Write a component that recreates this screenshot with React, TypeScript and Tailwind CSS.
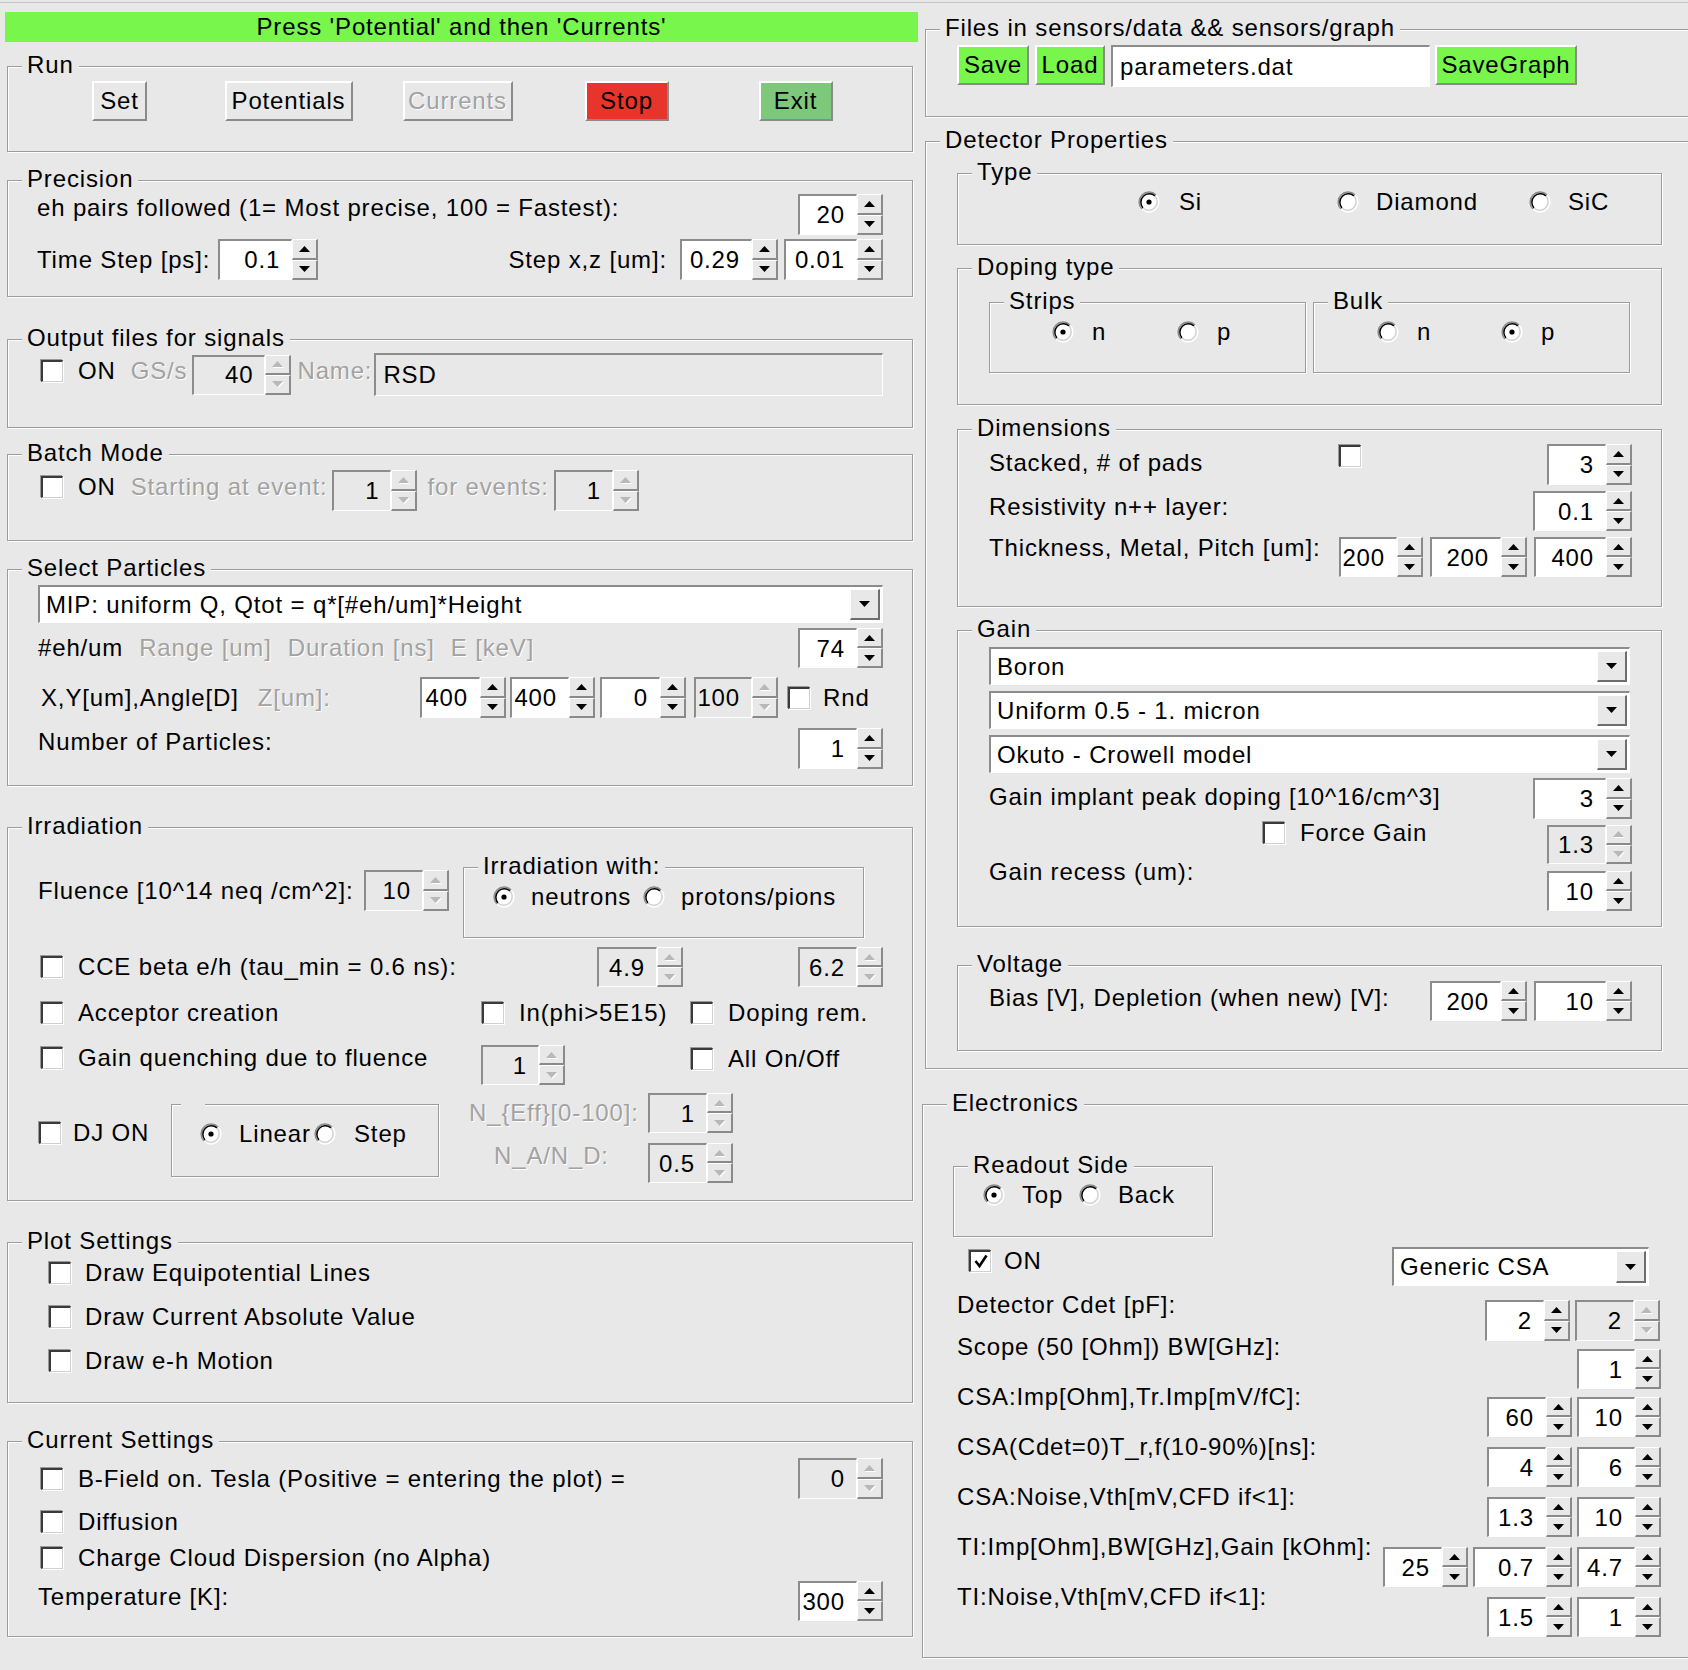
import React from "react";

type P = { className?: string; children?: React.ReactNode };

// etched group frame with its title sitting on the top line
const Box = ({
  label,
  lx = "left-[14px] px-[5px]",
  className = "",
  children,
}: P & { label?: string; lx?: string }) => (
  <div
    className={`relative shrink-0 border border-[#9c9c9c] shadow-[inset_1px_1px_0_#fff,1px_1px_0_#fff] ${className}`}
  >
    {label !== undefined && (
      <span className={`absolute top-[-16px] bg-[#e8e8e8] whitespace-nowrap ${lx}`}>{label}</span>
    )}
    {children}
  </div>
);

const G = ({ className = "", children }: P) => (
  <span className={`text-[#a2a2a2] [text-shadow:1px_1px_0_#fff] ${className}`}>{children}</span>
);

const Btn = ({ className = "", children }: P) => (
  <div
    className={`flex items-center justify-center h-[40px] shrink-0 border-t-2 border-l-2 border-t-white border-l-white border-b-2 border-r-2 border-b-[#8a8a8a] border-r-[#8a8a8a] ${className}`}
  >
    {children}
  </div>
);

const Tri = ({ up, dis }: { up?: boolean; dis?: boolean }) => (
  <svg width="11" height="6" viewBox="0 0 11 6" className={dis ? "drop-shadow-[1px_1px_0_#fff]" : ""}>
    <path d={up ? "M0 6 L5.5 0 L11 6 Z" : "M0 0 L11 0 L5.5 6 Z"} fill={dis ? "#b8b8b8" : "#000"} />
  </svg>
);

const Arr = ({ up, dis }: { up?: boolean; dis?: boolean }) => (
  <div className="flex-1 flex items-center justify-center bg-[#e8e8e8] border-t border-l border-t-white border-l-white border-b-2 border-r-2 border-b-[#8a8a8a] border-r-[#8a8a8a]">
    <Tri up={up} dis={dis} />
  </div>
);

const Spin = ({ v, dis, className = "w-[85px] h-[41px]" }: { v: string; dis?: boolean; className?: string }) => (
  <div className={`flex shrink-0 ${className}`}>
    <div
      className={`flex-1 flex items-center justify-end pr-[11px] border-t-2 border-l-2 border-t-[#8c8c8c] border-l-[#8c8c8c] border-b border-r border-b-white border-r-white ${
        dis ? "bg-[#e8e8e8]" : "bg-white"
      }`}
    >
      {v}
    </div>
    <div className="w-[26px] flex flex-col">
      <Arr up dis={dis} />
      <Arr dis={dis} />
    </div>
  </div>
);

const Entry = ({ v, dis, className = "" }: { v: string; dis?: boolean; className?: string }) => (
  <div
    className={`flex items-center pl-[7px] shrink-0 border-t-2 border-l-2 border-t-[#8c8c8c] border-l-[#8c8c8c] border-b border-r border-b-white border-r-white ${
      dis ? "bg-[#e8e8e8]" : "bg-white"
    } ${className}`}
  >
    {v}
  </div>
);

const Combo = ({ v, className = "" }: { v: string; className?: string }) => (
  <div
    className={`flex items-stretch shrink-0 bg-white border-t-2 border-l-2 border-t-[#8c8c8c] border-l-[#8c8c8c] border-b border-r border-b-white border-r-white ${className}`}
  >
    <span className="flex-1 flex items-center pl-[6px]">{v}</span>
    <div className="w-[30px] my-[2px] mr-[2px] flex items-center justify-center bg-[#e8e8e8] border-t border-l border-t-white border-l-white border-b-2 border-r-2 border-b-[#6e6e6e] border-r-[#6e6e6e]">
      <Tri />
    </div>
  </div>
);

const Chk = ({ on, className = "" }: { on?: boolean; className?: string }) => (
  <div
    className={`shrink-0 w-[22px] h-[22px] flex items-center justify-center bg-white border-t-2 border-l-2 border-t-[#3a3a3a] border-l-[#3a3a3a] border-b border-r border-b-[#d0d0d0] border-r-[#d0d0d0] shadow-[-1px_-1px_0_#9a9a9a,1px_1px_0_#fff] ${className}`}
  >
    {on && (
      <svg width="16" height="16" viewBox="0 0 16 16">
        <path d="M2.5 8 L6.5 13 L13.5 2.5" stroke="#000" strokeWidth="2.6" fill="none" />
      </svg>
    )}
  </div>
);

const Radio = ({ on }: { on?: boolean }) => (
  <svg width="22" height="22" viewBox="0 0 22 22" className="shrink-0">
    <circle cx="11" cy="11" r="8.5" fill="#fff" />
    <path d="M3.93 18.07 A10 10 0 0 1 18.07 3.93" stroke="#8a8a8a" strokeWidth="1.5" fill="none" />
    <path d="M3.93 18.07 A10 10 0 0 0 18.07 3.93" stroke="#fff" strokeWidth="1.5" fill="none" />
    <path d="M5 17 A8.5 8.5 0 0 1 17 5" stroke="#000" strokeWidth="1.5" fill="none" />
    <path d="M5 17 A8.5 8.5 0 0 0 17 5" stroke="#d4d4d4" strokeWidth="1.5" fill="none" />
    {on && <circle cx="11" cy="11" r="2.6" fill="#000" />}
  </svg>
);

const Left = () => (
  <div className="w-[920px] shrink-0 flex flex-col">
    <div className="mt-[9px] ml-[5px] w-[913px] h-[30px] bg-[#78f64c] flex items-center justify-center">
      Press 'Potential' and then 'Currents'
    </div>

    <Box label="Run" className="mt-[24px] ml-[7px] w-[906px] h-[86px]">
      <div className="grid grid-cols-5 ml-[27px] w-[845px] mt-[14px]">
        <div className="flex justify-center">
          <Btn className="w-[55px]">Set</Btn>
        </div>
        <div className="flex justify-center">
          <Btn className="w-[128px]">Potentials</Btn>
        </div>
        <div className="flex justify-center">
          <Btn className="w-[110px]">
            <G>Currents</G>
          </Btn>
        </div>
        <div className="flex justify-center">
          <Btn className="w-[84px] bg-[#e8352b]">Stop</Btn>
        </div>
        <div className="flex justify-center">
          <Btn className="w-[74px] bg-[#7dc87a]">Exit</Btn>
        </div>
      </div>
    </Box>

    <Box label="Precision" className="mt-[28px] ml-[7px] w-[906px] h-[117px]">
      <div className="flex items-center justify-between h-[41px] mt-[13px] pl-[29px] pr-[29px]">
        <span className="mb-[13px]">eh pairs followed (1= Most precise, 100 = Fastest):</span>
        <Spin v="20" />
      </div>
      <div className="flex items-center h-[41px] mt-[4px] pl-[29px] pr-[29px]">
        <span>Time Step [ps]:</span>
        <Spin v="0.1" className="ml-[8px] w-[100px] h-[41px]" />
        <span className="ml-auto">Step x,z [um]:</span>
        <Spin v="0.29" className="ml-[13px] w-[98px] h-[41px]" />
        <Spin v="0.01" className="ml-[6px] w-[99px] h-[41px]" />
      </div>
    </Box>

    <Box label="Output files for signals" className="mt-[42px] ml-[7px] w-[906px] h-[89px]">
      <div className="flex items-center h-[43px] mt-[13px] pl-[33px] pr-[29px]">
        <Chk className="mb-[8px]" />
        <span className="ml-[15px] mb-[8px]">ON</span>
        <G className="ml-[15px] mb-[8px]">GS/s</G>
        <Spin v="40" dis className="ml-[5px] w-[99px] h-[40px]" />
        <G className="ml-[6px] mb-[8px]">Name:</G>
        <Entry v="RSD" dis className="ml-[2px] flex-1 h-[43px]" />
      </div>
    </Box>

    <Box label="Batch Mode" className="mt-[26px] ml-[7px] w-[906px] h-[87px]">
      <div className="flex items-center h-[41px] mt-[15px] pl-[33px]">
        <Chk className="mb-[8px]" />
        <span className="ml-[15px] mb-[8px]">ON</span>
        <G className="ml-[15px] mb-[8px]">Starting at event:</G>
        <Spin v="1" dis className="ml-[5px] w-[85px] h-[41px]" />
        <G className="ml-[10px] mb-[8px]">for events:</G>
        <Spin v="1" dis className="ml-[5px] w-[85px] h-[41px]" />
      </div>
    </Box>

    <Box label="Select Particles" className="mt-[28px] ml-[7px] w-[906px] h-[217px]">
      <Combo v="MIP: uniform Q, Qtot = q*[#eh/um]*Height" className="mt-[15px] ml-[30px] w-[845px] h-[38px]" />
      <div className="flex items-center h-[40px] mt-[5px] pl-[30px] pr-[29px]">
        <span>#eh/um</span>
        <G className="ml-[16px]">Range [um]</G>
        <G className="ml-[16px]">Duration [ns]</G>
        <G className="ml-[16px]">E [keV]</G>
        <Spin v="74" className="ml-auto w-[85px] h-[40px]" />
      </div>
      <div className="flex items-center h-[41px] mt-[9px] pl-[33px]">
        <div className="w-[379px] flex items-center">
          <span>X,Y[um],Angle[D]</span>
          <G className="ml-[19px]">Z[um]:</G>
        </div>
        <Spin v="400" className="w-[86px] h-[41px]" />
        <Spin v="400" className="ml-[4px] w-[85px] h-[41px]" />
        <Spin v="0" className="ml-[5px] w-[86px] h-[41px]" />
        <Spin v="100" dis className="ml-[8px] w-[84px] h-[41px]" />
        <Chk className="ml-[10px]" />
        <span className="ml-[13px]">Rnd</span>
      </div>
      <div className="flex items-center h-[41px] mt-[10px] pl-[30px] pr-[29px]">
        <span className="mb-[14px]">Number of Particles:</span>
        <Spin v="1" className="ml-auto w-[85px] h-[41px]" />
      </div>
    </Box>

    <Box label="Irradiation" className="mt-[41px] ml-[7px] w-[906px] h-[374px]">
      <div className="flex items-start mt-[39px]">
        <div className="flex items-center h-[41px] mt-[3px] pl-[30px] w-[441px]">
          <span>Fluence [10^14 neq /cm^2]:</span>
          <Spin v="10" dis className="ml-auto w-[85px] h-[41px]" />
        </div>
        <Box label="Irradiation with:" className="ml-[14px] w-[401px] h-[71px]">
          <div className="flex items-center h-[22px] mt-[18px] pl-[29px]">
            <div className="w-[150px] flex items-center">
              <Radio on />
              <span className="ml-[16px]">neutrons</span>
            </div>
            <Radio />
            <span className="ml-[16px]">protons/pions</span>
          </div>
        </Box>
      </div>

      <div className="flex items-center h-[40px] mt-[9px]">
        <div className="w-[589px] flex items-center pl-[33px]">
          <Chk />
          <span className="ml-[15px]">CCE beta e/h (tau_min = 0.6 ns):</span>
        </div>
        <Spin v="4.9" dis className="w-[86px] h-[40px]" />
        <Spin v="6.2" dis className="ml-[115px] w-[85px] h-[40px]" />
      </div>

      <div className="flex items-center h-[28px] mt-[12px]">
        <div className="w-[474px] flex items-center pl-[33px]">
          <Chk />
          <span className="ml-[15px]">Acceptor creation</span>
        </div>
        <div className="w-[209px] flex items-center">
          <Chk />
          <span className="ml-[15px]">In(phi&gt;5E15)</span>
        </div>
        <Chk />
        <span className="ml-[15px]">Doping rem.</span>
      </div>

      <div className="flex items-start mt-[18px]">
        <div className="w-[473px] flex items-center h-[24px] mt-[1px] pl-[33px]">
          <Chk />
          <span className="ml-[15px]">Gain quenching due to fluence</span>
        </div>
        <Spin v="1" dis className="w-[84px] h-[40px]" />
        <div className="ml-[126px] flex items-center h-[24px] mt-[2px]">
          <Chk />
          <span className="ml-[15px]">All On/Off</span>
        </div>
      </div>

      <div className="flex items-start mt-[8px]">
        <div className="w-[163px] flex items-center h-[22px] mt-[29px] pl-[31px]">
          <Chk />
          <span className="ml-[12px]">DJ ON</span>
        </div>
        <Box label="" lx="left-[9px] w-[24px] h-[28px]" className="mt-[11px] w-[268px] h-[73px]">
          <div className="flex items-center h-[22px] mt-[18px] pl-[28px]">
            <div className="w-[114px] flex items-center">
              <Radio on />
              <span className="ml-[17px]">Linear</span>
            </div>
            <Radio />
            <span className="ml-[18px]">Step</span>
          </div>
        </Box>
        <div className="flex flex-col">
          <div className="flex items-center h-[40px]">
            <div className="w-[209px] pl-[30px]">
              <G>N_{"{Eff}"}[0-100]:</G>
            </div>
            <Spin v="1" dis className="w-[85px] h-[40px]" />
          </div>
          <div className="flex items-center h-[40px] mt-[10px]">
            <div className="w-[209px] pl-[55px] mb-[14px]">
              <G>N_A/N_D:</G>
            </div>
            <Spin v="0.5" dis className="w-[85px] h-[40px]" />
          </div>
        </div>
      </div>
    </Box>

    <Box label="Plot Settings" className="mt-[41px] ml-[7px] w-[906px] h-[161px]">
      <div className="flex items-center h-[28px] mt-[16px] pl-[41px]">
        <Chk />
        <span className="ml-[14px]">Draw Equipotential Lines</span>
      </div>
      <div className="flex items-center h-[28px] mt-[16px] pl-[41px]">
        <Chk />
        <span className="ml-[14px]">Draw Current Absolute Value</span>
      </div>
      <div className="flex items-center h-[28px] mt-[16px] pl-[41px]">
        <Chk />
        <span className="ml-[14px]">Draw e-h Motion</span>
      </div>
    </Box>

    <Box label="Current Settings" className="mt-[38px] ml-[7px] w-[906px] h-[196px]">
      <div className="flex items-center h-[41px] mt-[16px] pl-[33px] pr-[29px]">
        <Chk />
        <span className="ml-[15px]">B-Field on. Tesla (Positive = entering the plot) =</span>
        <Spin v="0" dis className="ml-auto w-[85px] h-[41px]" />
      </div>
      <div className="flex items-center h-[28px] mt-[9px] pl-[33px]">
        <Chk />
        <span className="ml-[15px]">Diffusion</span>
      </div>
      <div className="flex items-center h-[28px] mt-[8px] pl-[33px]">
        <Chk />
        <span className="ml-[15px]">Charge Cloud Dispersion (no Alpha)</span>
      </div>
      <div className="flex items-center h-[40px] mt-[9px] pl-[30px] pr-[29px]">
        <span className="mb-[8px]">Temperature [K]:</span>
        <Spin v="300" className="ml-auto w-[85px] h-[40px]" />
      </div>
    </Box>
  </div>
);

const Right = () => (
  <div className="w-[768px] shrink-0 flex flex-col">
    <Box label="Files in sensors/data && sensors/graph" className="mt-[26px] ml-[5px] w-[780px] border-r-0 h-[88px]">
      <div className="flex h-[40px] mt-[15px] ml-[31px]">
        <Btn className="w-[72px] bg-[#78f64c]">Save</Btn>
        <Btn className="ml-[6px] w-[70px] bg-[#78f64c]">Load</Btn>
        <Entry v="parameters.dat" className="ml-[6px] w-[319px] h-[42px]" />
        <Btn className="ml-[5px] w-[142px] bg-[#78f64c]">SaveGraph</Btn>
      </div>
    </Box>

    <Box label="Detector Properties" className="mt-[24px] ml-[5px] w-[780px] border-r-0 h-[928px]">
      <Box label="Type" className="mt-[31px] ml-[31px] w-[705px] h-[72px]">
        <div className="flex items-center h-[22px] mt-[17px] pl-[180px]">
          <div className="w-[199px] flex items-center">
            <Radio on />
            <span className="ml-[19px]">Si</span>
          </div>
          <div className="w-[192px] flex items-center">
            <Radio />
            <span className="ml-[17px]">Diamond</span>
          </div>
          <Radio />
          <span className="ml-[17px]">SiC</span>
        </div>
      </Box>

      <Box label="Doping type" className="mt-[23px] ml-[31px] w-[705px] h-[137px]">
        <div className="flex mt-[33px] ml-[31px]">
          <Box label="Strips" className="w-[317px] h-[71px]">
            <div className="flex items-center h-[22px] mt-[18px] pl-[62px]">
              <div className="w-[125px] flex items-center">
                <Radio on />
                <span className="ml-[18px]">n</span>
              </div>
              <Radio />
              <span className="ml-[18px]">p</span>
            </div>
          </Box>
          <Box label="Bulk" className="ml-[7px] w-[317px] h-[71px]">
            <div className="flex items-center h-[22px] mt-[18px] pl-[63px]">
              <div className="w-[124px] flex items-center">
                <Radio />
                <span className="ml-[18px]">n</span>
              </div>
              <Radio on />
              <span className="ml-[18px]">p</span>
            </div>
          </Box>
        </div>
      </Box>

      <Box label="Dimensions" className="mt-[24px] ml-[31px] w-[705px] h-[178px]">
        <div className="flex items-start h-[41px] mt-[14px] pl-[31px]">
          <span className="w-[350px] mt-[5px]">Stacked, # of pads</span>
          <Chk className="mt-[1px]" />
          <Spin v="3" className="ml-[186px] w-[85px] h-[41px]" />
        </div>
        <div className="flex items-start h-[40px] mt-[6px] pl-[31px] pr-[29px]">
          <span className="mt-[2px]">Resistivity n++ layer:</span>
          <Spin v="0.1" className="ml-auto w-[99px] h-[40px]" />
        </div>
        <div className="flex items-start h-[40px] mt-[6px] pl-[31px] pr-[29px]">
          <span className="-mt-[3px]">Thickness, Metal, Pitch [um]:</span>
          <Spin v="200" className="ml-auto w-[84px] h-[40px]" />
          <Spin v="200" className="ml-[7px] w-[97px] h-[40px]" />
          <Spin v="400" className="ml-[7px] w-[98px] h-[40px]" />
        </div>
      </Box>

      <Box label="Gain" className="mt-[23px] ml-[31px] w-[705px] h-[297px]">
        <Combo v="Boron" className="mt-[16px] ml-[31px] w-[641px] h-[38px]" />
        <Combo v="Uniform 0.5 - 1. micron" className="mt-[6px] ml-[31px] w-[641px] h-[38px]" />
        <Combo v="Okuto - Crowell model" className="mt-[6px] ml-[31px] w-[641px] h-[38px]" />
        <div className="flex mt-[5px] pl-[31px] pr-[29px]">
          <div className="flex-1 flex flex-col">
            <span className="mt-[5px]">Gain implant peak doping [10^16/cm^3]</span>
            <div className="flex items-center h-[28px] mt-[8px] pl-[274px]">
              <Chk />
              <span className="ml-[15px]">Force Gain</span>
            </div>
            <span className="mt-[11px]">Gain recess (um):</span>
          </div>
          <div className="flex flex-col items-end">
            <Spin v="3" className="w-[99px] h-[41px]" />
            <Spin v="1.3" dis className="mt-[6px] w-[85px] h-[39px]" />
            <Spin v="10" className="mt-[7px] w-[85px] h-[40px]" />
          </div>
        </div>
      </Box>

      <Box label="Voltage" className="mt-[38px] ml-[31px] w-[705px] h-[86px]">
        <div className="flex items-center h-[40px] mt-[15px] pl-[31px] pr-[29px]">
          <span className="mb-[6px]">Bias [V], Depletion (when new) [V]:</span>
          <Spin v="200" className="ml-auto w-[97px] h-[40px]" />
          <Spin v="10" className="ml-[7px] w-[98px] h-[40px]" />
        </div>
      </Box>
    </Box>

    <Box label="Electronics" lx="left-[24px] px-[5px]" className="mt-[35px] ml-[2px] w-[785px] border-r-0 h-[554px]">
      <Box label="Readout Side" className="mt-[61px] ml-[30px] w-[260px] h-[71px]">
        <div className="flex items-center h-[22px] mt-[17px] pl-[29px]">
          <div className="w-[96px] flex items-center">
            <Radio on />
            <span className="ml-[17px]">Top</span>
          </div>
          <Radio />
          <span className="ml-[17px]">Back</span>
        </div>
      </Box>

      <div className="flex items-center h-[39px] mt-[10px]">
        <div className="w-[469px] flex items-center pl-[46px] mb-[12px]">
          <Chk on />
          <span className="ml-[13px]">ON</span>
        </div>
        <Combo v="Generic CSA" className="w-[257px] h-[39px]" />
      </div>

      <div className="flex">
        <div className="w-[460px] flex flex-col pl-[34px]">
          <span className="mt-[5px]">Detector Cdet [pF]:</span>
          <span className="mt-[14px]">Scope (50 [Ohm]) BW[GHz]:</span>
          <span className="mt-[22px]">CSA:Imp[Ohm],Tr.Imp[mV/fC]:</span>
          <span className="mt-[22px]">CSA(Cdet=0)T_r,f(10-90%)[ns]:</span>
          <span className="mt-[22px]">CSA:Noise,Vth[mV,CFD if&lt;1]:</span>
          <span className="mt-[22px]">TI:Imp[Ohm],BW[GHz],Gain [kOhm]:</span>
          <span className="mt-[22px]">TI:Noise,Vth[mV,CFD if&lt;1]:</span>
        </div>
        <div className="w-[278px] flex flex-col items-end">
          <div className="flex mt-[14px] mr-[1px]">
            <Spin v="2" className="w-[85px] h-[41px]" />
            <Spin v="2" dis className="ml-[5px] w-[85px] h-[41px]" />
          </div>
          <Spin v="1" className="mt-[8px] w-[84px] h-[40px]" />
          <div className="flex mt-[8px]">
            <Spin v="60" className="w-[85px] h-[40px]" />
            <Spin v="10" className="ml-[5px] w-[84px] h-[40px]" />
          </div>
          <div className="flex mt-[10px]">
            <Spin v="4" className="w-[85px] h-[40px]" />
            <Spin v="6" className="ml-[5px] w-[84px] h-[40px]" />
          </div>
          <div className="flex mt-[10px]">
            <Spin v="1.3" className="w-[85px] h-[40px]" />
            <Spin v="10" className="ml-[5px] w-[84px] h-[40px]" />
          </div>
          <div className="flex mt-[10px]">
            <Spin v="25" className="w-[85px] h-[40px]" />
            <Spin v="0.7" className="ml-[5px] w-[99px] h-[40px]" />
            <Spin v="4.7" className="ml-[5px] w-[84px] h-[40px]" />
          </div>
          <div className="flex mt-[10px]">
            <Spin v="1.5" className="w-[85px] h-[40px]" />
            <Spin v="1" className="ml-[5px] w-[84px] h-[40px]" />
          </div>
        </div>
      </div>
    </Box>
  </div>
);

export default function App() {
  return (
    <div className="w-[1688px] h-[1670px] overflow-hidden bg-[#e8e8e8] text-black text-[24px] leading-[28px] tracking-[0.85px] whitespace-nowrap [font-family:'Liberation_Sans',Arial,sans-serif]">
      <div className="h-[2px]" />
      <div className="h-px bg-[#c4c4c4]" />
      <div className="flex">
        <Left />
        <Right />
      </div>
    </div>
  );
}
